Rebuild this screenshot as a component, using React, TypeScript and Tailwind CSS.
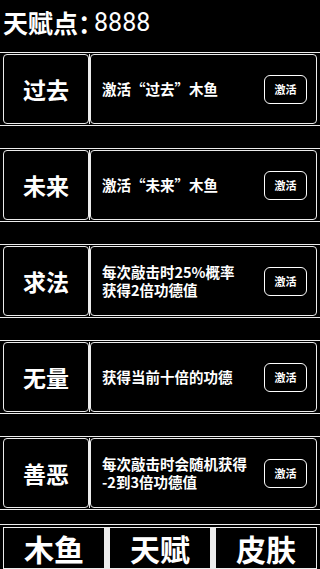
import React from "react";

const CJK = { fontFamily: '"Noto Sans CJK SC", "Noto Sans", sans-serif' };

type Row = { name: string; lines: string[] };

const rows: Row[] = [
  { name: "过去", lines: ["激活“过去”木鱼"] },
  { name: "未来", lines: ["激活“未来”木鱼"] },
  { name: "求法", lines: ["每次敲击时25%概率", "获得2倍功德值"] },
  { name: "无量", lines: ["获得当前十倍的功德"] },
  { name: "善恶", lines: ["每次敲击时会随机获得", "-2到3倍功德值"] },
];

function TalentRow({ row }: { row: Row }) {
  return (
    <div className="h-[74px] border-y border-[#ececec] px-[3px] py-[1px] flex">
      <div className="w-[86px] border border-[#ececec] rounded-[4px] flex items-center justify-center">
        <span className="text-white text-[23px] font-bold leading-none">{row.name}</span>
      </div>
      <div className="w-[1px] bg-[#ececec]" />
      <div className="flex-1 border border-[#ececec] rounded-[4px] flex items-center pl-[11px] pr-[9px]">
        <div className="flex-1 text-white text-[14.5px] font-bold leading-[18px] whitespace-nowrap">
          {row.lines.map((l, i) => (
            <React.Fragment key={i}>
              {i > 0 && <br />}
              {l}
            </React.Fragment>
          ))}
        </div>
        <div className="w-[43px] h-[29px] border-[1.5px] border-white rounded-[6px] flex items-center justify-center text-white text-[11px] font-bold">
          激活
        </div>
      </div>
    </div>
  );
}

export default function App() {
  return (
    <div className="w-[320px] h-[569px] bg-black overflow-hidden flex flex-col" style={CJK}>
      <div className="h-[52px] flex items-center px-[3px] pb-[8px]">
        <span className="text-white text-[25px] font-bold leading-none">
          天赋点<span className="tracking-[-9px]">：</span>
        </span>
        <span
          className="text-white text-[25px] leading-none"
          style={{ fontFamily: 'Roboto, "Noto Sans", sans-serif' }}
        >
          8888
        </span>
      </div>
      <div className="flex flex-col gap-[22px]">
        {rows.map((r) => (
          <TalentRow key={r.name} row={r} />
        ))}
      </div>
      <div className="mt-[14px] border-t border-[#ececec] px-[3px] pt-[2px] flex h-[45px]">
        {["木鱼", "天赋", "皮肤"].map((t, i) => (
          <React.Fragment key={t}>
            {i > 0 && <div className="w-[4px] bg-[#ececec]" />}
            <div className="flex-1 border border-[#ececec] flex items-center justify-center">
              <span className="text-white text-[30px] font-bold leading-none">{t}</span>
            </div>
          </React.Fragment>
        ))}
      </div>
    </div>
  );
}
